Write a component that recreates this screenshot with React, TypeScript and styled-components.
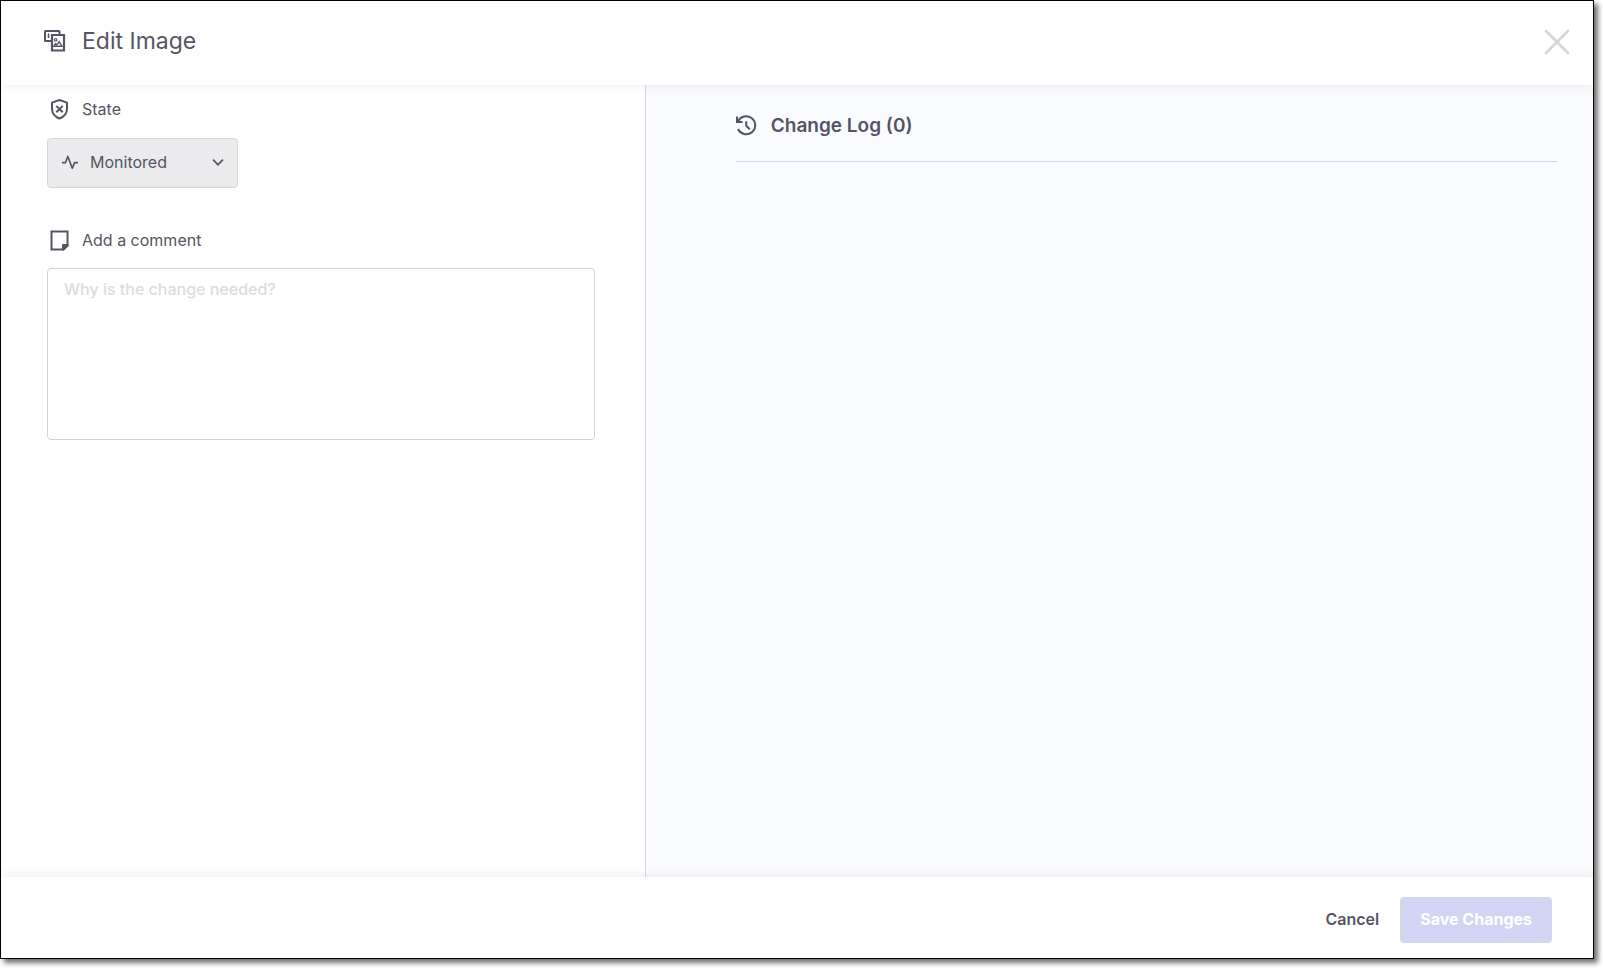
import React, { useState } from 'react';
import styled, { createGlobalStyle } from 'styled-components';

const GlobalStyle = createGlobalStyle`
  *, *::before, *::after { box-sizing: border-box; }
  body {
    margin: 0;
    background: #ffffff;
    color: #555463;
    font-family: Inter, "Liberation Sans", sans-serif;
  }
  button, select, textarea { font: inherit; color: inherit; }
`;

const Page = styled.div`
  display: flex;
  min-height: 100vh;
  padding: 0 9px 9px 0;
`;

const Dialog = styled.main`
  flex: 1;
  display: flex;
  flex-direction: column;
  border: 1px solid #000000;
  background: #ffffff;
  box-shadow: 4px 4px 5px rgba(24, 20, 22, 0.6);
`;

const Header = styled.header`
  display: flex;
  align-items: center;
  justify-content: space-between;
  height: 84px;
  padding: 0 22px 2px 41px;
  box-shadow: 0 2px 10px rgba(0, 0, 0, 0.06);
  z-index: 1;
`;

const Title = styled.h1`
  display: flex;
  align-items: center;
  gap: 16px;
  margin: 0;
  padding-bottom: 2px;
  font-size: 23px;
  line-height: 28px;
  font-weight: 400;
`;

const CloseButton = styled.button`
  display: flex;
  padding: 0;
  border: 0;
  background: none;
  cursor: pointer;
`;

const Body = styled.div`
  flex: 1;
  display: flex;
`;

const FormPanel = styled.form`
  width: 40.5%;
  padding: 12px 50px 24px 46px;
  border-right: 1px solid #d0d4f2;
`;

const LogPanel = styled.section`
  flex: 1;
  padding: 28px 36px 24px 90px;
  background: #fafbff;
`;

const Field = styled.div`
  margin-bottom: 40px;
`;

const FieldLabel = styled.label`
  display: flex;
  align-items: center;
  gap: 10px;
  padding-left: 1px;
  font-size: 16px;
  line-height: 24px;
`;

const SelectWrap = styled.div`
  display: grid;
  align-items: center;
  width: 191px;
  margin-top: 17px;

  > * { grid-area: 1 / 1; }
  > svg { pointer-events: none; }
  > svg:first-of-type { margin-left: 14px; }
  > svg:last-of-type { justify-self: end; margin-right: 14px; }
`;

const Select = styled.select`
  width: 100%;
  height: 50px;
  padding: 0 40px 2px 42px;
  border: 1px solid #d6d6da;
  border-radius: 4px;
  background: #ebebed;
  appearance: none;
  font-size: 16px;
`;

const Comment = styled.textarea`
  display: block;
  width: 100%;
  height: 172px;
  margin-top: 16px;
  padding: 8px 16px;
  border: 1px solid #d4d4d6;
  border-radius: 4px;
  background: #ffffff;
  resize: none;
  font-size: 16px;
  line-height: 24px;
  font-weight: 500;

  &::placeholder { color: #dcdce0; opacity: 1; }
`;

const LogTitle = styled.h2`
  display: flex;
  align-items: center;
  gap: 13px;
  margin: 0;
  padding-bottom: 22px;
  border-bottom: 1px solid #d0d4f2;
  font-size: 19px;
  line-height: 26px;
  font-weight: 600;
`;

const Footer = styled.footer`
  display: flex;
  align-items: center;
  justify-content: flex-end;
  gap: 21px;
  height: 81px;
  padding: 5px 41px 0 20px;
  background: #ffffff;
  box-shadow: 0 -2px 10px rgba(0, 0, 0, 0.06);
  z-index: 1;
`;

const FooterButton = styled.button<{ $primary?: boolean }>`
  height: 46px;
  padding: 0 ${({ $primary }) => ($primary ? 20 : 0)}px 2px;
  border: 0;
  border-radius: 4px;
  background: ${({ $primary }) => ($primary ? '#d1d5f2' : 'none')};
  color: ${({ $primary }) => ($primary ? '#ffffff' : '#555463')};
  font-size: 16px;
  font-weight: ${({ $primary }) => ($primary ? 700 : 600)};
`;

const stroke = {
  fill: 'none',
  stroke: '#555463',
  strokeWidth: 2,
  'aria-hidden': true,
} as const;

const ImagesIcon = () => (
  <svg width="24" height="24" viewBox="0 0 24 24" {...stroke}>
    <path d="M9 12H3.500a.5.500 0 0 1-.5-.5V2.500a.5.500 0 0 1 .5-.5h13.500a.5.500 0 0 1 .5.500V5" />
    <path d="M6.500 4.500v4.500" strokeWidth="1.600" />
    <path d="M10 6h12v15.500H10z" strokeWidth="2.200" />
    <circle cx="13.700" cy="10.800" r="1.300" strokeWidth="1.200" />
    <path d="M12 17.200l1.300-2.400 1.600.8 2.300-2.900 2.800 4.500z" strokeWidth="1.400" />
  </svg>
);

const ShieldIcon = () => (
  <svg width="24" height="24" viewBox="0 0 24 24" {...stroke} strokeLinejoin="round">
    <path d="M11.500 3l7.500 2.600v6c0 4.800-3 8.300-7.500 9.900-4.500-1.600-7.500-5.100-7.500-9.900v-6z" />
    <path d="M8.300 8.900l6.400 6.400M14.700 8.900l-6.400 6.400" />
  </svg>
);

const NoteIcon = () => (
  <svg width="24" height="24" viewBox="0 0 24 24" {...stroke}>
    <path d="M3.500 3.500h16v14L15.500 21.500h-12z" />
    <path d="M14.500 22V16.500H20v1.300L16 22z" fill="#555463" strokeWidth="1" />
  </svg>
);

const PulseIcon = () => (
  <svg width="18" height="18" viewBox="0 0 18 18" {...stroke} strokeWidth="1.700" strokeLinejoin="round">
    <path d="M1 8.700h3.400L6.800 2.500l4.500 11.800 2.200-5.600H17" />
  </svg>
);

const ChevronIcon = () => (
  <svg width="12" height="12" viewBox="0 0 12 12" {...stroke} strokeWidth="1.700">
    <path d="M1 2.700l5 5 5-5" />
  </svg>
);

const HistoryIcon = () => (
  <svg width="22" height="22" viewBox="0 0 22 22" {...stroke} strokeWidth="2">
    <path d="M2 6.600A9 9 0 1 1 2 14" />
    <path d="M1 1.600v5.400h5.500" />
    <path d="M10.200 6.200v4.600l3.600 3.400" />
  </svg>
);

const CloseIcon = () => (
  <svg width="28" height="28" viewBox="0 0 28 28" fill="none" stroke="#d6d6d9" strokeWidth="2.800" strokeLinecap="round" aria-hidden="true">
    <path d="M3 3l22 22M25 3L3 25" />
  </svg>
);

export default function App() {
  const [state, setState] = useState('monitored');
  const [comment, setComment] = useState('');

  return (
    <>
      <GlobalStyle />
      <Page>
        <Dialog>
          <Header>
            <Title>
              <ImagesIcon />
              Edit Image
            </Title>
            <CloseButton type="button" aria-label="Close">
              <CloseIcon />
            </CloseButton>
          </Header>
          <Body>
            <FormPanel id="edit-image">
              <Field>
                <FieldLabel htmlFor="state">
                  <ShieldIcon />
                  State
                </FieldLabel>
                <SelectWrap>
                  <Select id="state" value={state} onChange={(e) => setState(e.target.value)}>
                    <option value="monitored">Monitored</option>
                  </Select>
                  <PulseIcon />
                  <ChevronIcon />
                </SelectWrap>
              </Field>
              <Field>
                <FieldLabel htmlFor="comment">
                  <NoteIcon />
                  Add a comment
                </FieldLabel>
                <Comment
                  id="comment"
                  placeholder="Why is the change needed?"
                  value={comment}
                  onChange={(e) => setComment(e.target.value)}
                />
              </Field>
            </FormPanel>
            <LogPanel>
              <LogTitle>
                <HistoryIcon />
                Change Log (0)
              </LogTitle>
            </LogPanel>
          </Body>
          <Footer>
            <FooterButton type="button">Cancel</FooterButton>
            <FooterButton $primary type="submit" form="edit-image" disabled>
              Save Changes
            </FooterButton>
          </Footer>
        </Dialog>
      </Page>
    </>
  );
}
